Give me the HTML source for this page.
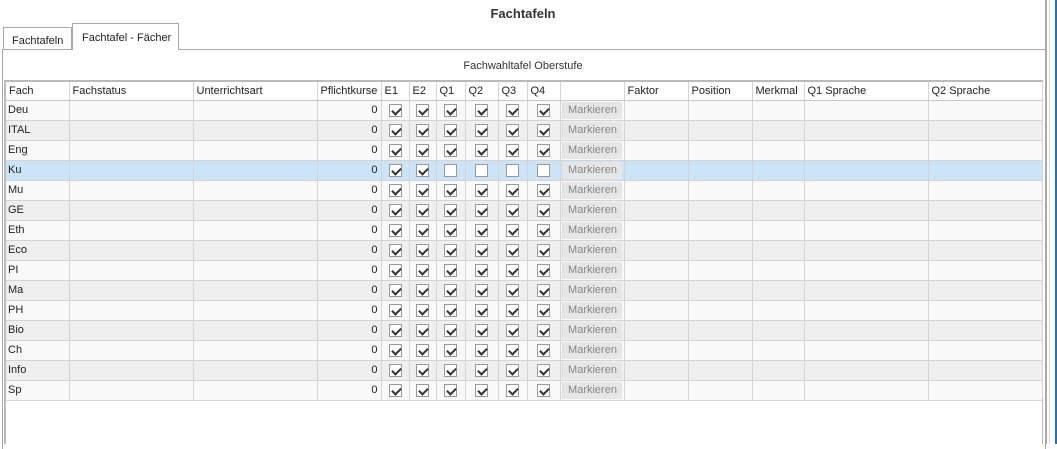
<!DOCTYPE html>
<html><head><meta charset="utf-8"><style>
*{box-sizing:border-box}
body{margin:0;width:1057px;height:444px;background:#fff;font-family:"Liberation Sans",Tahoma,sans-serif;font-size:11px;color:#222;position:relative;overflow:hidden}
.title{position:absolute;left:0;width:1046px;top:6px;text-align:center;font-weight:bold;font-size:13px;color:#333}
.tab{position:absolute;font-size:11px;color:#222;border:1px solid #a9a9a9;border-bottom:none;background:#fff}
.panel{position:absolute;left:2px;top:49px;width:1044px;height:400px;border:1px solid #a9a9a9;border-bottom:none}
.cap{position:absolute;left:0;width:1046px;top:60px;text-align:center;color:#333}
table{position:absolute;left:4px;top:80px;border-collapse:collapse;table-layout:fixed;border-top:2px solid #bbb;border-left:2px solid #bbb;border-right:1px solid #bbb}
td{height:20px;border:1px solid #d4d4d4;padding:0 2px;white-space:nowrap;overflow:hidden}
tr.h td{background:#fff;border-bottom:1px solid #c8c8c8;padding-left:3px;height:19px}
tr.a td{background:#f9f9f9}
tr.b td{background:#efefef}
tr.s td{background:#cce4f7;border-top:1px dotted #333;border-bottom:1px dotted #333}
td.n{text-align:right;padding-right:3px}
td.c{text-align:center;padding:0}
.cb{display:inline-block;width:13px;height:13px;border:1px solid #999;background:#fff;vertical-align:middle;position:relative}
.cb.k::after{content:"";position:absolute;left:2px;top:1px;width:7px;height:4px;border-left:2px solid #333;border-bottom:2px solid #333;transform:rotate(-45deg) translate(-1px,1px)}
.btn{display:block;margin:0 auto;width:60px;height:17px;background:#e6e6e6;border-left:1px solid #ddd;color:#888;text-align:center;line-height:17px}
td.bt{padding:0 1px}
.r1{position:absolute;left:1045px;top:0;width:2px;height:444px;border-left:1px solid #a9a9a9;border-right:1px solid #a9a9a9}
.r2{position:absolute;left:1049px;top:0;width:1px;height:444px;background:#ddd}
.r3{position:absolute;left:1055px;top:0;width:2px;height:444px;background:#1a73c8}
</style></head><body>
<div class="title">Fachtafeln</div>
<div class="tab" style="left:3px;top:27px;width:69px;height:23px;padding:7px 0 0 8px">Fachtafeln</div>
<div class="tab" style="left:72px;top:23px;width:107px;height:27px;padding:8px 0 0 9px;z-index:2">Fachtafel - Fächer</div>
<div class="panel"></div>
<div class="cap">Fachwahltafel Oberstufe</div>
<table>
<colgroup><col style="width:64px"><col style="width:124px"><col style="width:124px"><col style="width:64px"><col style="width:28px"><col style="width:27px"><col style="width:29px"><col style="width:33px"><col style="width:29px"><col style="width:33px"><col style="width:64px"><col style="width:64px"><col style="width:64px"><col style="width:52px"><col style="width:124px"><col style="width:114px"></colgroup>
<tr class="h"><td>Fach</td><td>Fachstatus</td><td>Unterrichtsart</td><td>Pflichtkurse</td><td>E1</td><td>E2</td><td>Q1</td><td>Q2</td><td>Q3</td><td>Q4</td><td></td><td>Faktor</td><td>Position</td><td>Merkmal</td><td>Q1 Sprache</td><td>Q2 Sprache</td></tr>
<tr class="a"><td>Deu</td><td></td><td></td><td class="n">0</td><td class="c"><i class="cb k"></i></td><td class="c"><i class="cb k"></i></td><td class="c"><i class="cb k"></i></td><td class="c"><i class="cb k"></i></td><td class="c"><i class="cb k"></i></td><td class="c"><i class="cb k"></i></td><td class="bt"><span class="btn">Markieren</span></td><td></td><td></td><td></td><td></td><td></td></tr>
<tr class="b"><td>ITAL</td><td></td><td></td><td class="n">0</td><td class="c"><i class="cb k"></i></td><td class="c"><i class="cb k"></i></td><td class="c"><i class="cb k"></i></td><td class="c"><i class="cb k"></i></td><td class="c"><i class="cb k"></i></td><td class="c"><i class="cb k"></i></td><td class="bt"><span class="btn">Markieren</span></td><td></td><td></td><td></td><td></td><td></td></tr>
<tr class="a"><td>Eng</td><td></td><td></td><td class="n">0</td><td class="c"><i class="cb k"></i></td><td class="c"><i class="cb k"></i></td><td class="c"><i class="cb k"></i></td><td class="c"><i class="cb k"></i></td><td class="c"><i class="cb k"></i></td><td class="c"><i class="cb k"></i></td><td class="bt"><span class="btn">Markieren</span></td><td></td><td></td><td></td><td></td><td></td></tr>
<tr class="s"><td>Ku</td><td></td><td></td><td class="n">0</td><td class="c"><i class="cb k"></i></td><td class="c"><i class="cb k"></i></td><td class="c"><i class="cb"></i></td><td class="c"><i class="cb"></i></td><td class="c"><i class="cb"></i></td><td class="c"><i class="cb"></i></td><td class="bt"><span class="btn">Markieren</span></td><td></td><td></td><td></td><td></td><td></td></tr>
<tr class="a"><td>Mu</td><td></td><td></td><td class="n">0</td><td class="c"><i class="cb k"></i></td><td class="c"><i class="cb k"></i></td><td class="c"><i class="cb k"></i></td><td class="c"><i class="cb k"></i></td><td class="c"><i class="cb k"></i></td><td class="c"><i class="cb k"></i></td><td class="bt"><span class="btn">Markieren</span></td><td></td><td></td><td></td><td></td><td></td></tr>
<tr class="b"><td>GE</td><td></td><td></td><td class="n">0</td><td class="c"><i class="cb k"></i></td><td class="c"><i class="cb k"></i></td><td class="c"><i class="cb k"></i></td><td class="c"><i class="cb k"></i></td><td class="c"><i class="cb k"></i></td><td class="c"><i class="cb k"></i></td><td class="bt"><span class="btn">Markieren</span></td><td></td><td></td><td></td><td></td><td></td></tr>
<tr class="a"><td>Eth</td><td></td><td></td><td class="n">0</td><td class="c"><i class="cb k"></i></td><td class="c"><i class="cb k"></i></td><td class="c"><i class="cb k"></i></td><td class="c"><i class="cb k"></i></td><td class="c"><i class="cb k"></i></td><td class="c"><i class="cb k"></i></td><td class="bt"><span class="btn">Markieren</span></td><td></td><td></td><td></td><td></td><td></td></tr>
<tr class="b"><td>Eco</td><td></td><td></td><td class="n">0</td><td class="c"><i class="cb k"></i></td><td class="c"><i class="cb k"></i></td><td class="c"><i class="cb k"></i></td><td class="c"><i class="cb k"></i></td><td class="c"><i class="cb k"></i></td><td class="c"><i class="cb k"></i></td><td class="bt"><span class="btn">Markieren</span></td><td></td><td></td><td></td><td></td><td></td></tr>
<tr class="a"><td>PI</td><td></td><td></td><td class="n">0</td><td class="c"><i class="cb k"></i></td><td class="c"><i class="cb k"></i></td><td class="c"><i class="cb k"></i></td><td class="c"><i class="cb k"></i></td><td class="c"><i class="cb k"></i></td><td class="c"><i class="cb k"></i></td><td class="bt"><span class="btn">Markieren</span></td><td></td><td></td><td></td><td></td><td></td></tr>
<tr class="b"><td>Ma</td><td></td><td></td><td class="n">0</td><td class="c"><i class="cb k"></i></td><td class="c"><i class="cb k"></i></td><td class="c"><i class="cb k"></i></td><td class="c"><i class="cb k"></i></td><td class="c"><i class="cb k"></i></td><td class="c"><i class="cb k"></i></td><td class="bt"><span class="btn">Markieren</span></td><td></td><td></td><td></td><td></td><td></td></tr>
<tr class="a"><td>PH</td><td></td><td></td><td class="n">0</td><td class="c"><i class="cb k"></i></td><td class="c"><i class="cb k"></i></td><td class="c"><i class="cb k"></i></td><td class="c"><i class="cb k"></i></td><td class="c"><i class="cb k"></i></td><td class="c"><i class="cb k"></i></td><td class="bt"><span class="btn">Markieren</span></td><td></td><td></td><td></td><td></td><td></td></tr>
<tr class="b"><td>Bio</td><td></td><td></td><td class="n">0</td><td class="c"><i class="cb k"></i></td><td class="c"><i class="cb k"></i></td><td class="c"><i class="cb k"></i></td><td class="c"><i class="cb k"></i></td><td class="c"><i class="cb k"></i></td><td class="c"><i class="cb k"></i></td><td class="bt"><span class="btn">Markieren</span></td><td></td><td></td><td></td><td></td><td></td></tr>
<tr class="a"><td>Ch</td><td></td><td></td><td class="n">0</td><td class="c"><i class="cb k"></i></td><td class="c"><i class="cb k"></i></td><td class="c"><i class="cb k"></i></td><td class="c"><i class="cb k"></i></td><td class="c"><i class="cb k"></i></td><td class="c"><i class="cb k"></i></td><td class="bt"><span class="btn">Markieren</span></td><td></td><td></td><td></td><td></td><td></td></tr>
<tr class="b"><td>Info</td><td></td><td></td><td class="n">0</td><td class="c"><i class="cb k"></i></td><td class="c"><i class="cb k"></i></td><td class="c"><i class="cb k"></i></td><td class="c"><i class="cb k"></i></td><td class="c"><i class="cb k"></i></td><td class="c"><i class="cb k"></i></td><td class="bt"><span class="btn">Markieren</span></td><td></td><td></td><td></td><td></td><td></td></tr>
<tr class="a"><td>Sp</td><td></td><td></td><td class="n">0</td><td class="c"><i class="cb k"></i></td><td class="c"><i class="cb k"></i></td><td class="c"><i class="cb k"></i></td><td class="c"><i class="cb k"></i></td><td class="c"><i class="cb k"></i></td><td class="c"><i class="cb k"></i></td><td class="bt"><span class="btn">Markieren</span></td><td></td><td></td><td></td><td></td><td></td></tr>
</table>
<div style="position:absolute;left:4px;top:398px;width:2px;height:46px;background:#bbb"></div>
<div style="position:absolute;left:1042px;top:398px;width:1px;height:46px;background:#bbb"></div>
<div class="r1"></div><div class="r2"></div><div class="r3"></div>
</body></html>
